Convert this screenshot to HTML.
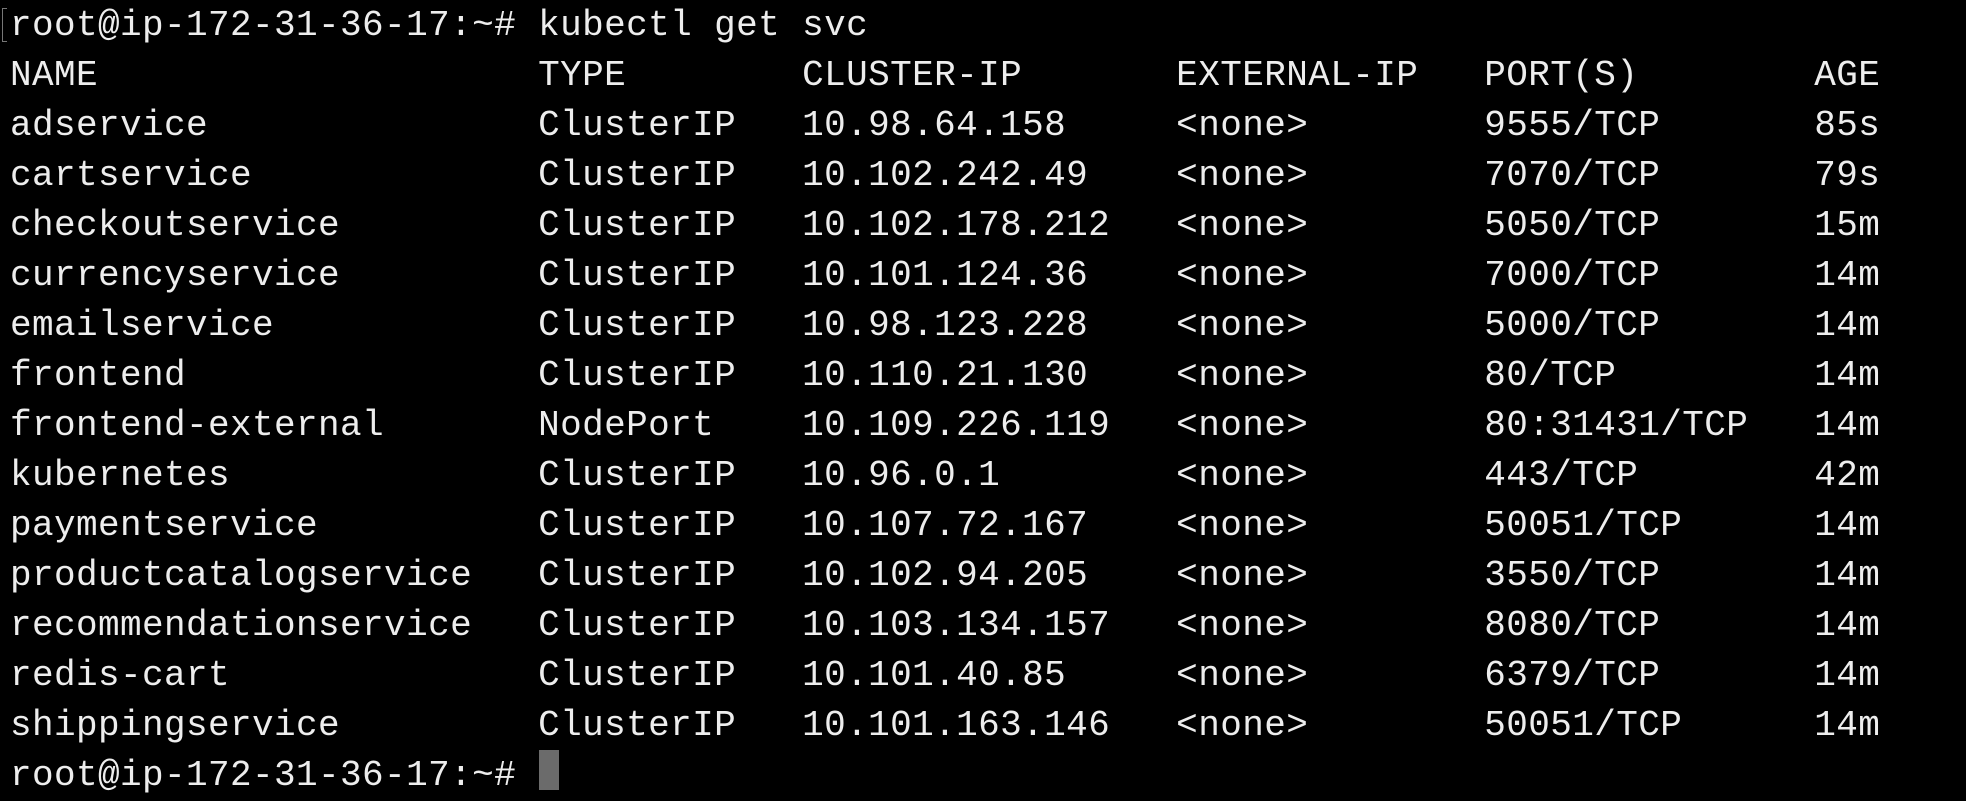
<!DOCTYPE html>
<html><head><meta charset="utf-8"><style>
html,body{margin:0;padding:0;background:#000;width:1966px;height:786px;overflow:hidden}
pre{position:absolute;left:10px;top:1px;margin:0;font-family:"Liberation Mono",monospace;font-size:36px;letter-spacing:0.4px;line-height:50px;color:#ededed;white-space:pre}
.cur{position:absolute;left:539px;top:750px;width:20px;height:40px;background:#6b6b6b}
.br{position:absolute;left:2px;top:8px;width:4px;height:32px;border:1px solid #777;border-right:none}
</style></head><body>
<div class="br"></div>
<pre>root@ip-172-31-36-17:~# kubectl get svc
NAME                    TYPE        CLUSTER-IP       EXTERNAL-IP   PORT(S)        AGE
adservice               ClusterIP   10.98.64.158     &lt;none&gt;        9555/TCP       85s
cartservice             ClusterIP   10.102.242.49    &lt;none&gt;        7070/TCP       79s
checkoutservice         ClusterIP   10.102.178.212   &lt;none&gt;        5050/TCP       15m
currencyservice         ClusterIP   10.101.124.36    &lt;none&gt;        7000/TCP       14m
emailservice            ClusterIP   10.98.123.228    &lt;none&gt;        5000/TCP       14m
frontend                ClusterIP   10.110.21.130    &lt;none&gt;        80/TCP         14m
frontend-external       NodePort    10.109.226.119   &lt;none&gt;        80:31431/TCP   14m
kubernetes              ClusterIP   10.96.0.1        &lt;none&gt;        443/TCP        42m
paymentservice          ClusterIP   10.107.72.167    &lt;none&gt;        50051/TCP      14m
productcatalogservice   ClusterIP   10.102.94.205    &lt;none&gt;        3550/TCP       14m
recommendationservice   ClusterIP   10.103.134.157   &lt;none&gt;        8080/TCP       14m
redis-cart              ClusterIP   10.101.40.85     &lt;none&gt;        6379/TCP       14m
shippingservice         ClusterIP   10.101.163.146   &lt;none&gt;        50051/TCP      14m
root@ip-172-31-36-17:~# </pre>
<div class="cur"></div>
</body></html>
